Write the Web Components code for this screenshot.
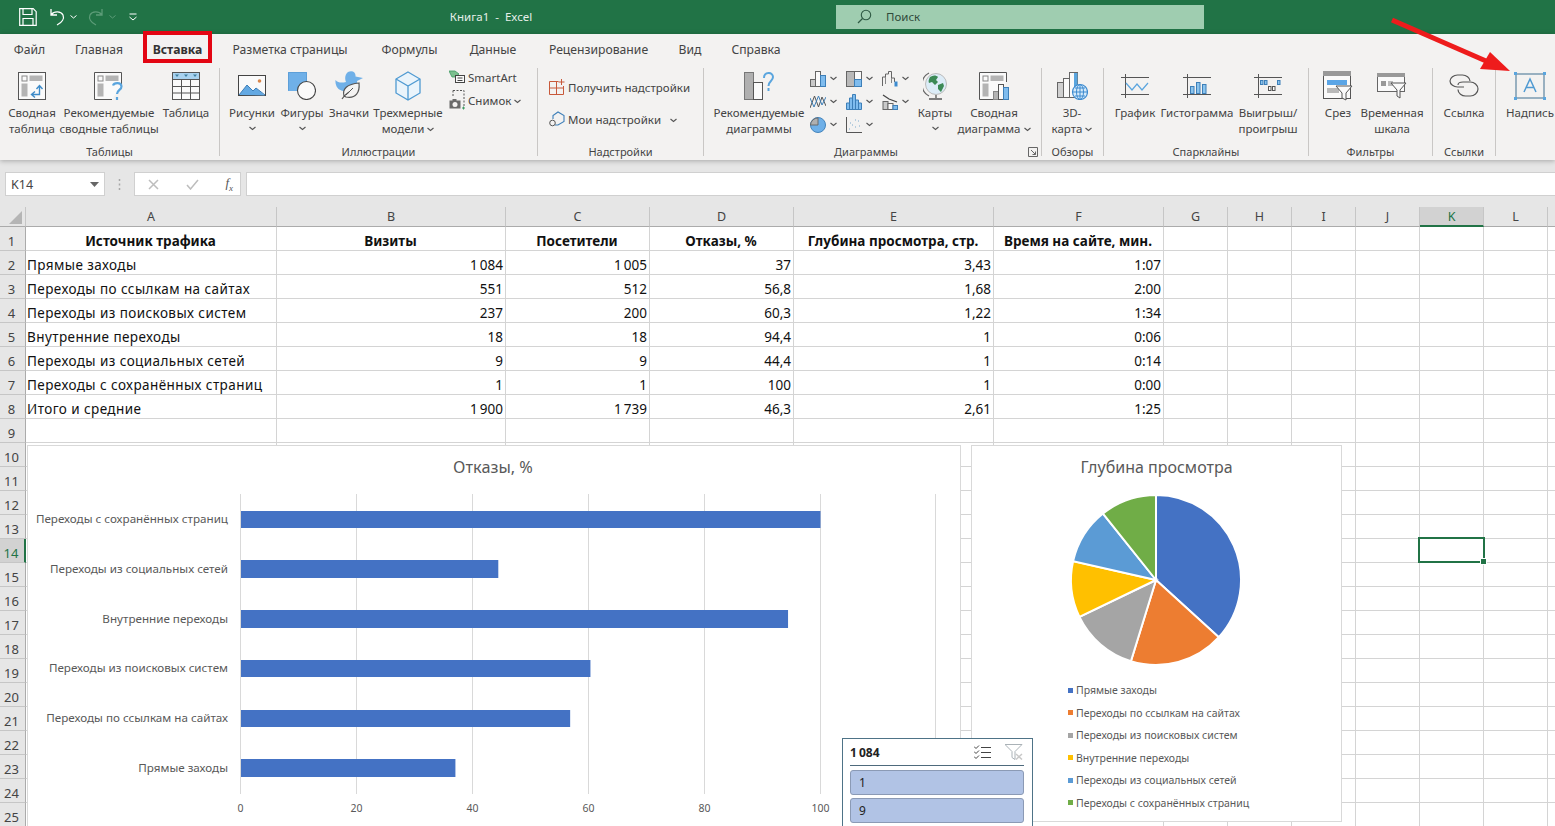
<!DOCTYPE html>
<html lang="ru">
<head>
<meta charset="utf-8">
<title>Книга1 - Excel</title>
<style>
  html, body { margin: 0; height: 826px; overflow: hidden; background: #fff; }
  body { font-family: "Noto Sans", "Liberation Sans", sans-serif; position: relative; }
  svg { display: block; }
</style>
</head>
<body>

<xl-titlebar title-text="Книга1  -  Excel" search="Поиск"></xl-titlebar>

<xl-ribbon>
  <xl-group label="Таблицы" style="width:220px;padding-left:2px">
    <xl-btn w="60"><svg slot="icon" width="28" height="28" viewBox="0 0 28 28"><rect x=".5" y=".5" width="27" height="27" fill="#fafafa" stroke="#555"/><rect x="4" y="4" width="5" height="5" fill="none" stroke="#888"/><rect x="11.5" y="3.5" width="13" height="5.5" fill="#b4b4b4"/><rect x="3.5" y="11.5" width="6" height="13" fill="#b4b4b4"/><path d="M14 22.5h7.5V14M18.5 17l3-3.5 3 3.5M17 19.5l-3.5 3 3.5 3" fill="none" stroke="#3f8cc9" stroke-width="1.4"/></svg>Сводная<br>таблица</xl-btn>
    <xl-btn w="94"><svg slot="icon" width="30" height="28" viewBox="0 0 30 28"><path d="M27.5 13V.5H.5v27H18" fill="#fafafa" stroke="#555"/><rect x="4" y="4" width="5" height="5" fill="none" stroke="#888"/><rect x="11.5" y="3.5" width="13" height="5.5" fill="#b4b4b4"/><rect x="3.5" y="11.5" width="6" height="13" fill="#b4b4b4"/><path d="M19 13.5c1-3 8-3.500 8.500.8.300 3.500-4.500 3.700-4.500 7.700M23 25v3" fill="none" stroke="#5aa5de" stroke-width="2.200"/></svg>Рекомендуемые<br>сводные таблицы</xl-btn>
    <xl-btn w="60"><svg slot="icon" width="28" height="28" viewBox="0 0 28 28"><rect x=".5" y=".5" width="27" height="27" fill="#fafafa" stroke="#555"/><rect x="1" y="1" width="26" height="6" fill="#a9d2ef"/><path d="M.5 7.500h27M.5 14.500h27M.5 21h27M9.500 7.500v20M18.500 7.500v20" stroke="#555" fill="none"/><path d="M3 2.500h4L5 5zM12 2.500h4L14 5zM21 2.500h4L23 5z" fill="#3f7f9f"/></svg>Таблица</xl-btn>
  </xl-group>

  <xl-group label="Иллюстрации" style="width:318px;padding-left:6px">
    <xl-btn w="52"><svg slot="icon" width="28" height="22" viewBox="0 0 28 22"><rect x=".5" y=".5" width="27" height="20" fill="#fafafa" stroke="#444"/><path d="M1 20l8-10 6 6 3-3 9 7.500z" fill="#63a9e3"/><path d="M1 20l8-10 6 6M15 16l3-3 9 7" fill="none" stroke="#3d7fb8"/><circle cx="21.500" cy="6" r="1.800" fill="#d9874d"/></svg>Рисунки<xl-caret slot="below"></xl-caret></xl-btn>
    <xl-btn w="48"><svg slot="icon" width="28" height="28" viewBox="0 0 28 28"><rect x="0" y="0" width="19" height="19" fill="#6fb0e8"/><path d="M.5 18.500V.5h18V9" fill="none" stroke="#5d9fd8"/><circle cx="18.500" cy="18.500" r="9" fill="#fafafa" stroke="#444" stroke-width="1.100"/></svg>Фигуры<xl-caret slot="below"></xl-caret></xl-btn>
    <xl-btn w="46"><svg slot="icon" width="29" height="30" viewBox="0 0 29 30"><path d="M13 1c5-2 8 1 7.500 4.500L28 7l-6 3c1 5-1 8-4 10l-10 0C3 19 0 15 .5 9 3 12 7 12 11 11 9.500 8 10 3 13 1z" fill="#6fb0e8"/><path d="M7 28c2-3 4-5 7-7M9 25c-2-7 3-12 15-13 1 9-3 16-13 14z" fill="#f4f3f2" stroke="#555" stroke-width="1.200"/><path d="M11 24l7-7" stroke="#555"/></svg>Значки</xl-btn>
    <xl-btn w="72"><svg slot="icon" width="26" height="30" viewBox="0 0 26 30"><path d="M13 1l12 7v14l-12 7L1 22V8z" fill="#eaf4fb" stroke="#4f9ad2" stroke-width="1.300"/><path d="M1 8l12 7 12-7M13 15v14" fill="none" stroke="#4f9ad2" stroke-width="1.300"/></svg>Трехмерные<br><span>модели <xl-caret></xl-caret></span></xl-btn>
    <xl-small-col style="margin-left:5px;margin-top:-1px;--gap:3px">
      <xl-small><svg slot="icon" width="16" height="14" viewBox="0 0 16 14"><path d="M0 1h6l4 3-4 3H3L1.500 4z" fill="#7cc08f" stroke="#3f9a63" stroke-width=".8"/><rect x="6.500" y="5.500" width="9" height="7" fill="#fafafa" stroke="#444"/><path d="M8.500 8h5M8.500 10.500h5" stroke="#444"/></svg>SmartArt</xl-small>
      <xl-small><svg slot="icon" width="16" height="20" viewBox="0 0 16 20"><path d="M4 .5h11v16" fill="none" stroke="#555" stroke-dasharray="2 1.500"/><path d="M4 .5v7" stroke="#555" stroke-dasharray="2 1.500"/><rect x=".5" y="10.500" width="11" height="8" fill="#6a6a6a"/><rect x="3.500" y="9" width="4" height="2" fill="#6a6a6a"/><circle cx="6" cy="14.500" r="2.500" fill="#f4f3f2"/><path d="M13 18h3M14.500 16.500v3" stroke="#3f9a63"/></svg>Снимок <xl-caret></xl-caret></xl-small>
    </xl-small-col>
  </xl-group>

  <xl-group label="Надстройки" style="width:166px;padding-left:11px">
    <xl-small-col style="margin-top:9px;--gap:12px">
      <xl-small><svg slot="icon" width="16" height="16" viewBox="0 0 16 16"><path d="M9.500 2.500h-9v13h14V7M.5 9h14M7.500 2.500v13" fill="none" stroke="#c8593a"/><path d="M12.500 0v6M9.500 3h6" stroke="#c8593a"/></svg>Получить надстройки</xl-small>
      <xl-small><svg slot="icon" width="16" height="16" viewBox="0 0 16 16"><path d="M4 8V4.500L9 1l6 3.500v6L9 14H6" fill="none" stroke="#3d7fb8" stroke-width="1.100"/><circle cx="3.500" cy="12" r="2.800" fill="#f4f3f2" stroke="#555"/></svg>Мои надстройки <xl-caret style="margin-left:6px"></xl-caret></xl-small>
    </xl-small-col>
  </xl-group>

  <xl-group label="Диаграммы" style="width:338px;padding-left:5px">
    <svg slot="launcher" width="10" height="10" viewBox="0 0 10 10"><path d="M.5 9.500V.5h9v9zM3 3l4.500 4.500M7.500 4.500v3h-3" fill="none" stroke="#666"/></svg>
    <xl-btn w="100"><svg slot="icon" width="30" height="28" viewBox="0 0 30 28"><rect x=".5" y=".5" width="9" height="27" fill="#b0b0b0" stroke="#777"/><rect x="9.500" y="10.500" width="9" height="17" fill="#fafafa" stroke="#555"/><path d="M20 6c0-6.500 9-6.500 9-1 0 4-4.500 4-4.500 9M24.500 16v3" fill="none" stroke="#5aa5de" stroke-width="2"/></svg>Рекомендуемые<br>диаграммы</xl-btn>
    <xl-mini-grid style="margin-top:-1px">
      <xl-mini><svg width="16" height="16" viewBox="0 0 16 16"><rect x=".5" y="8.500" width="5" height="7" fill="#c9c9c9" stroke="#666"/><rect x="5.500" y=".5" width="5" height="15" fill="#fafafa" stroke="#666"/><rect x="10.500" y="4.500" width="5" height="11" fill="#7fbcee" stroke="#3d7fb8"/></svg></xl-mini>
      <xl-mini><svg width="16" height="16" viewBox="0 0 16 16"><rect x=".5" y=".5" width="8" height="15" fill="#b9b9b9" stroke="#666"/><rect x="8.500" y=".5" width="7" height="8" fill="#fafafa" stroke="#666"/><rect x="8.500" y="8.500" width="7" height="7" fill="#7fbcee" stroke="#3d7fb8"/></svg></xl-mini>
      <xl-mini><svg width="16" height="16" viewBox="0 0 16 16"><path d="M.5 15V6h3V3h3V.5h3V7h3v4" fill="none" stroke="#666"/><path d="M3.500 6v7M9.500 7v5" stroke="#888"/><rect x="12.500" y="10.500" width="3" height="5" fill="#3d8bd0"/></svg></xl-mini>
      <xl-mini><svg width="16" height="16" viewBox="0 0 16 16"><path d="M0 14L4.500 2l4 11 3.500-10 4 9" fill="none" stroke="#555"/><path d="M0 4l4 9 4.500-11 3.500 9 4-8" fill="none" stroke="#3d7fb8"/></svg></xl-mini>
      <xl-mini><svg width="16" height="16" viewBox="0 0 16 16"><path d="M.5 15.500V9h3V4h3V.5h3V6h3v3h3v6.500z" fill="#7fbcee" stroke="#3d7fb8"/><path d="M3.500 9v6M6.500 4v11M9.500 6v9M12.500 9v6" stroke="#3d7fb8"/></svg></xl-mini>
      <xl-mini><svg width="16" height="16" viewBox="0 0 16 16"><path d="M1 1l6 4 8 3" fill="none" stroke="#444" stroke-width="1.300"/><rect x="1" y="7.500" width="5" height="8" fill="#c9c9c9" stroke="#666"/><rect x="6" y="9.500" width="5" height="6" fill="#fafafa" stroke="#666"/><rect x="11" y="11.500" width="4.500" height="4" fill="#7fbcee" stroke="#3d7fb8"/></svg></xl-mini>
      <xl-mini><svg width="16" height="16" viewBox="0 0 17 17"><circle cx="8.500" cy="8.500" r="8" fill="#6fb0e8" stroke="#3d7fb8"/><path d="M8.500 8.500V1a8 8 0 0 0-8 7.500z" fill="#b0b0b0" stroke="#666"/></svg></xl-mini>
      <xl-mini><svg width="16" height="16" viewBox="0 0 16 16"><path d="M.5 0v15.500H16" fill="none" stroke="#555"/><path d="M3 12h1M6 8h1M4 6h1M9 10h1M12 4h1M13 9h1M9 3h1" stroke="#7aa9cc"/></svg></xl-mini>
    </xl-mini-grid>
    <xl-btn w="44"><svg slot="icon" width="24" height="30" viewBox="0 0 24 30"><path d="M6 2a13 13 0 0 0 0 23" fill="none" stroke="#666" stroke-width="1.300"/><circle cx="13" cy="13" r="10.500" fill="#dcecf7" stroke="#bbb"/><path d="M7 6c3-2 6-2 8 0l-2 3 2 2-3 3-3-3-3 1c-1-2 0-4 1-6zM15 14l5-2 1 3-3 6-3-3z" fill="#3c8a56"/><path d="M13 24v3M6 28h13" stroke="#555" stroke-width="1.300"/></svg>Карты<xl-caret slot="below"></xl-caret></xl-btn>
    <xl-btn w="74"><svg slot="icon" width="30" height="28" viewBox="0 0 30 28"><path d="M27.500 10V.5H.5v27H14" fill="#fafafa" stroke="#555"/><rect x="4" y="4" width="5" height="5" fill="none" stroke="#888"/><rect x="11.500" y="3.500" width="13" height="5.500" fill="#b4b4b4"/><rect x="3.500" y="11.500" width="6" height="13" fill="#b4b4b4"/><rect x="14.500" y="19.500" width="5" height="8" fill="#b4b4b4" stroke="#888"/><rect x="19.500" y="12.500" width="5" height="15" fill="#fafafa" stroke="#555"/><rect x="24.500" y="15.500" width="5" height="12" fill="#7fbcee" stroke="#3d7fb8"/></svg>Сводная<br><span>диаграмма <xl-caret></xl-caret></span></xl-btn>
  </xl-group>

  <xl-group label="Обзоры" style="width:62px">
    <xl-btn w="60"><svg slot="icon" width="31" height="28" viewBox="0 0 31 28"><rect x=".5" y="10.500" width="6" height="15" fill="#d0d0d0" stroke="#666"/><rect x="6.500" y="6.500" width="6" height="19" fill="#fafafa" stroke="#666"/><rect x="12.500" y=".5" width="8" height="25" fill="#fafafa" stroke="#666"/><rect x="17" y="1" width="3.500" height="17" fill="#5aa5de"/><circle cx="23" cy="20" r="7.500" fill="#d5eafa" stroke="#3d8bd0" stroke-width="1.200"/><path d="M15.500 20h15M23 12.500v15M18 16h10M18 24h10" stroke="#3d8bd0" fill="none"/><ellipse cx="23" cy="20" rx="3.500" ry="7.500" fill="none" stroke="#3d8bd0"/></svg>3D-<br><span>карта <xl-caret></xl-caret></span></xl-btn>
  </xl-group>

  <xl-group label="Спарклайны" style="width:205px">
    <xl-btn w="62"><svg slot="icon" width="28" height="24" viewBox="0 0 28 24"><path d="M0 3.500h28M0 20.500h28M4.500 0v24" stroke="#555" fill="none"/><path d="M5 9l6 7 5-6 5 6 6-7" fill="none" stroke="#5aa5de" stroke-width="1.200"/></svg>График</xl-btn>
    <xl-btn w="62"><svg slot="icon" width="28" height="24" viewBox="0 0 28 24"><path d="M0 3.500h28M0 20.500h28M4.500 0v24" stroke="#555" fill="none"/><rect x="7.500" y="12.500" width="3.500" height="7" fill="#8ac4ee" stroke="#3d7fb8"/><rect x="13.500" y="8.500" width="3.500" height="11" fill="#8ac4ee" stroke="#3d7fb8"/><rect x="19.500" y="10.500" width="3.500" height="9" fill="#8ac4ee" stroke="#3d7fb8"/></svg>Гистограмма</xl-btn>
    <xl-btn w="80"><svg slot="icon" width="28" height="24" viewBox="0 0 28 24"><path d="M0 3.500h28M0 20.500h28M4.500 0v24" stroke="#555" fill="none"/><g fill="#8ac4ee" stroke="#3d7fb8"><rect x="6.500" y="6.500" width="2.500" height="4"/><rect x="10.500" y="6.500" width="2.500" height="4"/><rect x="23.500" y="6.500" width="2.500" height="4"/></g><g fill="#fafafa" stroke="#555"><rect x="14.500" y="12.500" width="2.500" height="4"/><rect x="18.500" y="12.500" width="2.500" height="4"/></g></svg>Выигрыш/<br>проигрыш</xl-btn>
  </xl-group>

  <xl-group label="Фильтры" style="width:124px">
    <xl-btn w="58"><svg slot="icon" width="30" height="30" viewBox="0 0 30 30"><rect x=".5" y="4.500" width="27" height="23" fill="#fafafa" stroke="#555"/><rect x="0" y="0" width="28" height="5" fill="#999"/><rect x="4" y="9" width="20" height="5" fill="#5aa5e6"/><rect x="4" y="17" width="12" height="5" fill="#b9b9b9"/><path d="M13 15h16l-6 7v7l-4-2v-5z" fill="#fafafa" stroke="#555"/></svg>Срез</xl-btn>
    <xl-btn w="50"><svg slot="icon" width="30" height="26" viewBox="0 0 30 26"><rect x=".5" y=".5" width="27" height="18" fill="#fafafa" stroke="#666"/><rect x="0" y="0" width="28" height="4" fill="#999"/><rect x="4" y="8" width="5" height="5" fill="#999"/><rect x="11" y="8" width="5" height="5" fill="#bbb"/><path d="M14 10h15l-6 7v8l-3-2v-6z" fill="#fafafa" stroke="#555"/></svg>Временная<br>шкала</xl-btn>
  </xl-group>

  <xl-group label="Ссылки" style="width:63px">
    <xl-btn w="62"><svg slot="icon" width="30" height="24" viewBox="0 0 30 24"><path d="M15 13H8.500C5 13 1 10.500 1 7s4-6 7.500-6h5C17 1 21 3.500 21 7" fill="none" stroke="#555" stroke-width="1.200"/><path d="M9 11c0-2 2-3 5-3h7.500c3.500 0 7.500 3 7.500 7s-4 7-7.500 7h-5C13 22 9 19.500 9 15.500" fill="none" stroke="#555" stroke-width="1.200"/></svg>Ссылка</xl-btn>
  </xl-group>

  <xl-group label="" style="width:59px" no-sep>
    <xl-btn w="68"><svg slot="icon" width="32" height="28" viewBox="0 0 32 28"><rect x="2" y="2" width="28" height="24" fill="none" stroke="#3f6f8f"/><rect x="0" y="0" width="3" height="3" fill="#5aa5de"/><rect x="29" y="0" width="3" height="3" fill="#5aa5de"/><rect x="0" y="25" width="3" height="3" fill="#5aa5de"/><rect x="29" y="25" width="3" height="3" fill="#5aa5de"/><path d="M10 20l6-13 6 13M12 15.500h8" fill="none" stroke="#4f9ad2" stroke-width="1.500"/></svg>Надпись</xl-btn>
  </xl-group>
</xl-ribbon>

<xl-formula cell="K14"></xl-formula>

<xl-sheet>
  <xl-bar-chart style="left:27px;top:238px"></xl-bar-chart>
  <xl-pie-chart style="left:971px;top:238px"></xl-pie-chart>
  <xl-slicer heading="1 084" style="left:842px;top:531px"><xl-slicer-item>1</xl-slicer-item><xl-slicer-item>9</xl-slicer-item></xl-slicer>
</xl-sheet>

<xl-arrow style="left:1385px;top:14px"></xl-arrow>

<script>
const UI_FONT = '"Noto Sans", "Liberation Sans", sans-serif';

function shadow(el, html) {
  el.attachShadow({ mode: "open" }).innerHTML = html;
}

class XlTitlebar extends HTMLElement {
  connectedCallback() {
    shadow(this, `<style>
      :host { display: grid; grid-template-columns: 150px 682px 372px; height: 34px; background: #217346; color: #fff; align-items: center; }
      #qat { display: flex; align-items: center; padding-left: 19px; }
      #title { text-align: center; font-size: 11.5px; color: #e6efe9; white-space: pre; margin-top: -2px; }
      #search { margin-left: 4px; height: 24px; background: #9fcdb0; display: flex; align-items: center; color: #2f4a3b; font-size: 11.5px; margin-top: -1px; }
      #search svg { margin-left: 21px; margin-right: 14px; }
      svg { display: block; }
    </style>
    <div id="qat">
      <svg width="18" height="18" viewBox="0 0 18 18" style="margin-right:13px"><path d="M.7.7h13.500l3 3v13.600H.7z M4 1v5.500h9V1M4 17v-6.500h10V17" fill="none" stroke="#fff" stroke-width="1.200"/></svg>
      <svg width="15" height="18" viewBox="0 0 15 18"><path d="M1 1v6h6M1.500 6.500C4 3 11 3 13 7c1.500 3.500-1 7.500-6 10" fill="none" stroke="#fff" stroke-width="1.300"/></svg>
      <svg width="7" height="4" viewBox="0 0 7 4" style="margin:0 11px 0 5px"><path d="M.5.500l3 2.500 3-2.500" fill="none" stroke="#fff"/></svg>
      <svg width="15" height="18" viewBox="0 0 15 18"><path d="M14 1v6H8M13.500 6.500C11 3 4 3 2 7c-1.500 3.500 1 7.500 6 10" fill="none" stroke="#5c9c78" stroke-width="1.300"/></svg>
      <svg width="7" height="4" viewBox="0 0 7 4" style="margin:0 13px 0 6px"><path d="M.5.500l3 2.500 3-2.500" fill="none" stroke="#5c9c78"/></svg>
      <svg width="8" height="8" viewBox="0 0 8 8"><path d="M.5 1h7M.5 4l3.500 3 3.500-3" fill="none" stroke="#fff"/></svg>
    </div>
    <div id="title">${this.getAttribute("title-text")}</div>
    <div id="search">
      <svg width="15" height="15" viewBox="0 0 15 15"><circle cx="9" cy="6" r="4.700" fill="none" stroke="#2f5a44" stroke-width="1.100"/><path d="M5.500 9.500L1 14" stroke="#2f5a44" stroke-width="1.300"/></svg>
      <span>${this.getAttribute("search")}</span>
    </div>`);
  }
}

const TABS = [["Файл", 59], ["Главная", 80], ["Вставка", 74], ["Разметка страницы", 154], ["Формулы", 85], ["Данные", 82], ["Рецензирование", 129], ["Вид", 54], ["Справка", 78]];

class XlRibbon extends HTMLElement {
  connectedCallback() {
    const tabs = TABS.map(([t, w], i) =>
      `<div class="tab${i === 2 ? " active" : ""}" style="width:${w}px"><span>${t}</span></div>`).join("");
    shadow(this, `<style>
      :host { display: block; height: 126px; background: #f3f2f1; color: #444; position: relative; z-index: 1; box-shadow: 0 1px 5px rgba(0,0,0,.28); font-size: 12px; }
      #tabs { display: flex; height: 34px; font-size: 12.2px; }
      .tab { flex: none; white-space: nowrap; text-align: center; padding-top: 1px; box-sizing: border-box; }
      .tab span { display: block; line-height: 30px; height: 24px; }
      .active span { font-weight: 700; color: #333; width: 61px; margin-left: 8px; outline: 4px solid #e30613; }
      #groups { display: flex; }
    </style><div id="tabs">${tabs}</div><div id="groups"><slot></slot></div>`);
  }
}

class XlGroup extends HTMLElement {
  connectedCallback() {
    shadow(this, `<style>
      :host { display: flex; flex-direction: column; height: 92px; box-sizing: border-box; flex: none; ${this.hasAttribute("no-sep") ? "" : "background: linear-gradient(#c9c7c5,#c9c7c5) right top / 1px 88px no-repeat;"} }
      #body { display: flex; height: 76px; align-items: flex-start; }
      #foot { display: flex; height: 16px; align-items: center; line-height: 16px; font-size: 11px; color: #444; margin-left: var(--foot-shift, 0); padding-right: 1px; }
      #label { flex: 1; text-align: center; white-space: nowrap; }
      ::slotted(svg) { margin-right: 3px; }
    </style>
    <div id="body"><slot></slot></div>
    <div id="foot"><div id="label">${this.getAttribute("label")}</div><slot name="launcher"></slot></div>`);
    // подпись центрируется по всей группе, а не по контенту
    const pad = parseFloat(this.style.paddingLeft) || 0;
    if (pad) this.style.setProperty("--foot-shift", -pad + "px");
  }
}

class XlBtn extends HTMLElement {
  connectedCallback() {
    shadow(this, `<style>
      :host { display: flex; flex-direction: column; align-items: center; flex: none; width: ${this.getAttribute("w")}px; }
      #icon { height: 36px; display: flex; align-items: center; justify-content: center; }
      #text { text-align: center; line-height: 16px; white-space: nowrap; font-size: 11.5px; color: #444; margin-top: 1px; }
      #below { height: 15px; display: flex; align-items: center; }
    </style>
    <div id="icon"><slot name="icon"></slot></div>
    <div id="text"><slot></slot></div>
    <div id="below"><slot name="below"></slot></div>`);
  }
}

class XlCaret extends HTMLElement {
  connectedCallback() {
    shadow(this, `<style>:host { display: inline-block; vertical-align: middle; line-height: 0; } svg { display: block; }</style>
      <svg width="7" height="5" viewBox="0 0 7 5"><path d="M.5 1l3 2.500 3-2.500" fill="none" stroke="#555" stroke-width="1.100"/></svg>`);
  }
}

class XlSmallCol extends HTMLElement {
  connectedCallback() {
    shadow(this, `<style>:host { display: flex; flex-direction: column; gap: var(--gap, 6px); flex: none; }</style><slot></slot>`);
  }
}

class XlSmall extends HTMLElement {
  connectedCallback() {
    shadow(this, `<style>
      :host { display: flex; align-items: center; gap: 3px; white-space: nowrap; font-size: 11.5px; color: #444; height: 20px; }
    </style><slot name="icon"></slot><span><slot></slot></span>`);
  }
}

class XlMiniGrid extends HTMLElement {
  connectedCallback() {
    shadow(this, `<style>:host { display: grid; grid-template-columns: repeat(3, 36px); grid-auto-rows: 23px; flex: none; width: 108px; margin-left: 1px; margin-right: -5px; }</style><slot></slot>`);
  }
}

class XlMini extends HTMLElement {
  connectedCallback() {
    shadow(this, `<style>:host { display: flex; align-items: center; gap: 4px; }</style>
      <slot></slot><xl-caret></xl-caret>`);
  }
}

class XlFormula extends HTMLElement {
  connectedCallback() {
    shadow(this, `<style>
      :host { display: flex; height: 47px; background: #e6e6e6; box-sizing: border-box; padding: 12px 0 11px 5px; font-size: 12.5px; color: #444; }
      .box { background: #fff; border: 1px solid #d0d0d0; box-sizing: border-box; height: 24px; display: flex; align-items: center; }
      #name { width: 100px; padding: 0 5px; justify-content: space-between; }
      #dots { width: 29px; display: flex; align-items: center; justify-content: center; }
      #fx { width: 107px; justify-content: space-between; padding: 0 7px 0 13px; margin-right: 5px; }
      #input { flex: 1; border-right: 0; }
      svg { display: block; }
      i { font: italic 13px "Liberation Serif", serif; color: #555; }
    </style>
    <div class="box" id="name"><span>${this.getAttribute("cell")}</span><svg width="9" height="5" viewBox="0 0 9 5"><path d="M0 0h9L4.500 5z" fill="#666"/></svg></div>
    <div id="dots"><svg width="3" height="11" viewBox="0 0 3 11"><path d="M1.500 0v2M1.500 4.500v2M1.500 9v2" stroke="#a8a8a8" stroke-width="1.500"/></svg></div>
    <div class="box" id="fx">
      <svg width="11" height="11" viewBox="0 0 11 11"><path d="M1 1l9 9M10 1l-9 9" stroke="#bdbdbd" stroke-width="1.500"/></svg>
      <svg width="13" height="11" viewBox="0 0 13 11"><path d="M1 6l3.500 4L12 1" fill="none" stroke="#bdbdbd" stroke-width="1.500"/></svg>
      <i>f<sub style="font-size:9px">x</sub></i>
    </div>
    <div class="box" id="input"></div>`);
  }
}

const COLS = ["A", "B", "C", "D", "E", "F", "G", "H", "I", "J", "K", "L", ""];
const WIDTHS = [251, 229, 144, 144, 200, 170, 64, 64, 64, 64, 64, 64, 64];
const DATA = [
  ["Источник трафика", "Визиты", "Посетители", "Отказы, %", "Глубина просмотра, стр.", "Время на сайте, мин."],
  ["Прямые заходы", "1 084", "1 005", "37", "3,43", "1:07"],
  ["Переходы по ссылкам на сайтах", "551", "512", "56,8", "1,68", "2:00"],
  ["Переходы из поисковых систем", "237", "200", "60,3", "1,22", "1:34"],
  ["Внутренние переходы", "18", "18", "94,4", "1", "0:06"],
  ["Переходы из социальных сетей", "9", "9", "44,4", "1", "0:14"],
  ["Переходы с сохранённых страниц", "1", "1", "100", "1", "0:00"],
  ["Итого и средние", "1 900", "1 739", "46,3", "2,61", "1:25"],
];

class XlSheet extends HTMLElement {
  connectedCallback() {
    let html = `<div class="hd corner"><svg width="13" height="13" viewBox="0 0 13 13"><path d="M13 0v13H0z" fill="#b5b5b5"/></svg></div>`;
    COLS.forEach(c => { html += `<div class="hd col${c === "K" ? " sel" : ""}">${c}</div>`; });
    for (let r = 1; r <= 25; r++) {
      html += `<div class="hd row${r === 14 ? " sel" : ""}">${r}</div>`;
      COLS.forEach((c, i) => {
        const v = DATA[r - 1] ? DATA[r - 1][i] : undefined;
        let cls = "c";
        if (r === 1) cls += " b";
        else if (i > 0) cls += " n";
        else cls += " t";
        html += `<div class="${cls}">${v === undefined ? "" : v}</div>`;
      });
    }
    shadow(this, `<style>
      :host { display: block; position: relative; height: 619px; overflow: hidden; background: #fff; }
      #grid { display: grid; grid-template-columns: 26px ${WIDTHS.map(w => w + "px").join(" ")}; grid-template-rows: 20px repeat(25, 24px); font-size: 13.5px; color: #111; }
      .hd { background: #e6e6e6; color: #444; font-size: 12.5px; display: flex; align-items: center; justify-content: center; box-sizing: border-box; border-right: 1px solid #c6c6c6; border-bottom: 1px solid #c6c6c6; }
      .corner { justify-content: flex-end; align-items: flex-end; padding: 0 3px 2px 0; border-bottom: 1px solid #ababab; }
      .col { border-bottom: 1px solid #ababab; }
      .row { padding-top: 4px; padding-right: 2px; border-right: 1px solid #ababab; font-size: 13px; }
      .col.sel { background: #d2d2d2; border-bottom: 2px solid #217346; color: #217346; }
      .row.sel { background: #d2d2d2; border-right: 2px solid #217346; color: #217346; }
      .c { box-sizing: border-box; border-right: 1px solid #d4d4d4; border-bottom: 1px solid #d4d4d4; display: flex; align-items: flex-end; line-height: 18px; padding: 0 2px 0 1px; white-space: nowrap; min-width: 0; }
      .b { font-weight: 700; justify-content: center; }
      .n { justify-content: flex-end; word-spacing: -1.500px; }
      .t { letter-spacing: .42px; }
      #cursor { position: absolute; left: 1418px; top: 330px; width: 67px; height: 26px; box-sizing: border-box; border: 2px solid #217346; }
      #cursor::after { content: ""; position: absolute; right: -4px; bottom: -4px; width: 5px; height: 5px; background: #217346; border: 1px solid #fff; }
      ::slotted(*) { position: absolute; }
    </style><div id="grid">${html}</div><div id="cursor"></div><slot></slot>`);
  }
}

const BARS = [["Переходы с сохранённых страниц", 100, 511, 17], ["Переходы из социальных сетей", 44.4, 560, 18], ["Внутренние переходы", 94.4, 610, 18], ["Переходы из поисковых систем", 60.3, 660, 17], ["Переходы по ссылкам на сайтах", 56.8, 710, 17], ["Прямые заходы", 37, 759, 18]];

class XlBarChart extends HTMLElement {
  connectedCallback() {
    const x0 = 240, unit = 5.795;
    let g = "";
    for (let v = 0; v <= 120; v += 20) {
      const x = Math.round(x0 + v * unit) + .5;
      g += `<path d="M${x} 494V794" stroke="#d9d9d9"/>`;
      if (v < 120) g += `<text x="${x}" y="812" text-anchor="middle" fill="#595959" font-size="10.5">${v}</text>`;
    }
    BARS.forEach(([t, v, y, h]) => {
      g += `<rect x="241" y="${y}" width="${v * unit}" height="${h}" fill="#4472c4"/>`;
      g += `<text x="228" y="${y + h / 2 + 3.500}" text-anchor="end" fill="#595959" font-size="11.650">${t}</text>`;
    });
    shadow(this, `<style>
      :host { display: block; width: 934px; height: 400px; background: #fff; box-sizing: border-box; outline: 1px solid #d9d9d9; outline-offset: -1px; font-family: ${UI_FONT}; }
      svg { display: block; }
    </style>
    <svg width="934" height="400" viewBox="27 445 934 400">
      <text x="493" y="473" text-anchor="middle" fill="#595959" font-size="16.300">Отказы, %</text>${g}
    </svg>`);
  }
}

const PIE = [[3.43, "#4472c4", "Прямые заходы"], [1.68, "#ed7d31", "Переходы по ссылкам на сайтах"], [1.22, "#a5a5a5", "Переходы из поисковых систем"], [1, "#ffc000", "Внутренние переходы"], [1, "#5b9bd5", "Переходы из социальных сетей"], [1, "#70ad47", "Переходы с сохранённых страниц"]];

class XlPieChart extends HTMLElement {
  connectedCallback() {
    const total = PIE.reduce((s, p) => s + p[0], 0);
    const cx = 1156, cy = 580, r = 85;
    let a = 0, wedges = "";
    PIE.forEach(([v, color]) => {
      const b = a + v / total * Math.PI * 2;
      const p = t => `${(cx + r * Math.sin(t)).toFixed(2)} ${(cy - r * Math.cos(t)).toFixed(2)}`;
      wedges += `<path d="M${cx} ${cy}L${p(a)}A${r} ${r} 0 ${b - a > Math.PI ? 1 : 0} 1 ${p(b)}Z" fill="${color}" stroke="#fff" stroke-width="2"/>`;
      a = b;
    });
    const legend = PIE.map(([, color, t]) =>
      `<div class="li"><i style="background:${color}"></i>${t}</div>`).join("");
    shadow(this, `<style>
      :host { display: flex; flex-direction: column; width: 371px; height: 377px; background: #fff; box-sizing: border-box; border: 1px solid #d9d9d9; font-family: ${UI_FONT}; color: #595959; }
      #t { text-align: center; font-size: 16px; line-height: 20px; margin-top: 11px; }
      svg { display: block; margin: 16px 0 0 0; }
      #legend { margin: 12px 0 0 96px; display: flex; flex-direction: column; }
      .li { height: 22.500px; line-height: 22.500px; font-size: 10.500px; white-space: nowrap; display: flex; align-items: center; gap: 3px; }
      .li i { width: 5px; height: 5px; display: block; }
    </style>
    <div id="t">Глубина просмотра</div>
    <svg width="369" height="174" viewBox="972 493 369 174">${wedges}</svg>
    <div id="legend">${legend}</div>`);
  }
}

class XlSlicer extends HTMLElement {
  connectedCallback() {
    shadow(this, `<style>
      :host { display: block; width: 191px; height: 100px; background: #fff; box-sizing: border-box; border: 1px solid #4e7387; padding: 0 8px 0 7px; font-family: ${UI_FONT}; }
      #head { display: flex; align-items: center; height: 26px; border-bottom: 1px solid #4e6a7c; font-weight: 700; font-size: 12px; color: #222; gap: 14px; word-spacing: -1px; }
      #head span { flex: 1; }
      svg { display: block; }
      #items { display: flex; flex-direction: column; gap: 3px; margin-top: 4px; }
    </style>
    <div id="head"><span>${this.getAttribute("heading")}</span>
      <svg width="17" height="15" viewBox="0 0 17 15"><path d="M7 2.500h10M7 7.500h10M7 12.500h10" stroke="#444"/><path d="M0 1.500l2 2 3-3M0 6.500l2 2 3-3M0 11.500l2 2 3-3" fill="none" stroke="#444"/></svg>
      <svg width="18" height="16" viewBox="0 0 18 16" style="margin-right:1px"><path d="M0 .5h17l-7 7v8l-3-2v-6z" fill="none" stroke="#aab2b7"/><path d="M11 10l6 5.500M17 10l-6 5.500" stroke="#c8c8c8" stroke-width="1.500"/></svg>
    </div>
    <div id="items"><slot></slot></div>`);
  }
}

class XlSlicerItem extends HTMLElement {
  connectedCallback() {
    shadow(this, `<style>
      :host { display: flex; align-items: center; height: 25px; box-sizing: border-box; padding-left: 8px; background: #b1c3e5; border: 1px solid #8b9ab5; border-radius: 3px; font-size: 12px; color: #222; }
    </style><slot></slot>`);
  }
}

class XlArrow extends HTMLElement {
  connectedCallback() {
    shadow(this, `<style>
      :host { display: block; position: absolute; width: 130px; height: 62px; z-index: 5; pointer-events: none; }
      svg { display: block; }
    </style>
    <svg width="130" height="62" viewBox="1385 14 130 62"><path d="M1392 20L1486 61" stroke="#ee1c1c" stroke-width="5"/><path d="M1510 71L1480 69L1490 52Z" fill="#ee1c1c"/></svg>`);
  }
}

customElements.define("xl-titlebar", XlTitlebar);
customElements.define("xl-ribbon", XlRibbon);
customElements.define("xl-group", XlGroup);
customElements.define("xl-btn", XlBtn);
customElements.define("xl-caret", XlCaret);
customElements.define("xl-small-col", XlSmallCol);
customElements.define("xl-small", XlSmall);
customElements.define("xl-mini-grid", XlMiniGrid);
customElements.define("xl-mini", XlMini);
customElements.define("xl-formula", XlFormula);
customElements.define("xl-sheet", XlSheet);
customElements.define("xl-bar-chart", XlBarChart);
customElements.define("xl-pie-chart", XlPieChart);
customElements.define("xl-slicer", XlSlicer);
customElements.define("xl-slicer-item", XlSlicerItem);
customElements.define("xl-arrow", XlArrow);
</script>
</body>
</html>
